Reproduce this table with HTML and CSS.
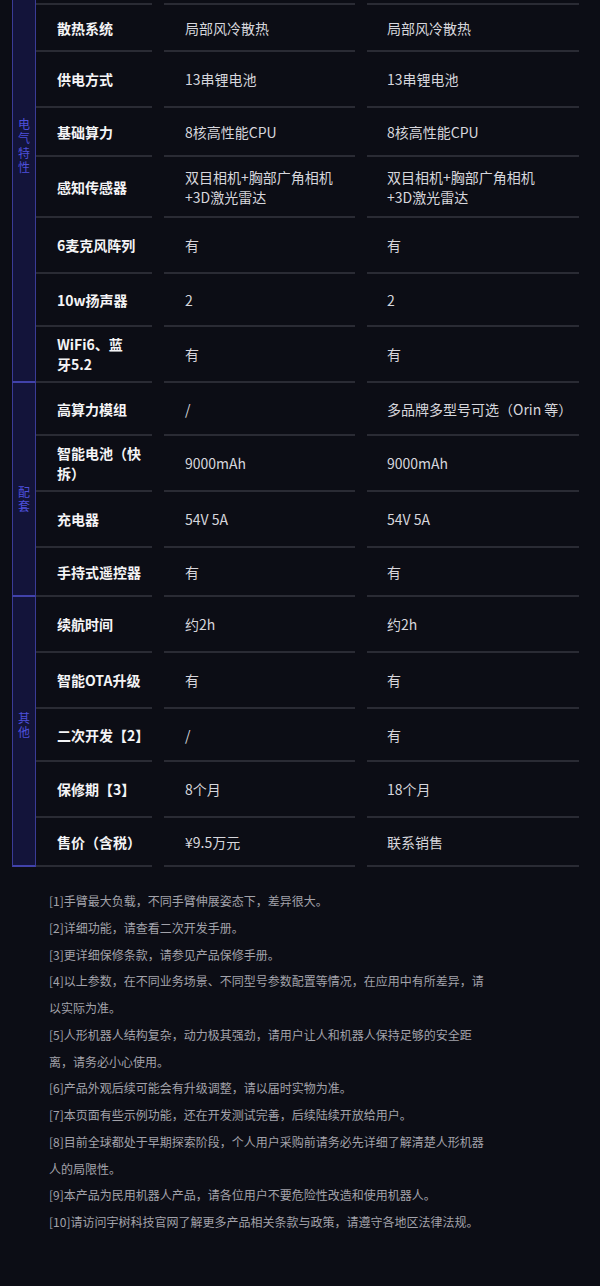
FILE: index.html
```html
<!DOCTYPE html>
<html lang="zh-CN">

<head>
  <meta charset="UTF-8">
  <meta name="viewport" content="width=device-width, initial-scale=1.0">
  <title>参数对比</title>
  <link rel="stylesheet" href="styles.css">
</head>

<body>
  <div class="specs">
    <!-- 电气特性 -->
    <section class="group group-first">
      <div class="cat cat-elec"><span>电<br>气<br>特<br>性</span></div>
      <div class="rows">
        <div class="row row-top">
          <div class="k"></div>
          <div class="v"></div>
          <div class="v"></div>
        </div>
        <div class="row row-xs">
          <div class="k">散热系统</div>
          <div class="v">局部风冷散热</div>
          <div class="v">局部风冷散热</div>
        </div>
        <div class="row row-l">
          <div class="k">供电方式</div>
          <div class="v">13串锂电池</div>
          <div class="v">13串锂电池</div>
        </div>
        <div class="row row-s">
          <div class="k">基础算力</div>
          <div class="v">8核高性能CPU</div>
          <div class="v">8核高性能CPU</div>
        </div>
        <div class="row row-xl">
          <div class="k">感知传感器</div>
          <div class="v">双目相机+胸部广角相机<br>+3D激光雷达</div>
          <div class="v">双目相机+胸部广角相机<br>+3D激光雷达</div>
        </div>
        <div class="row row-l">
          <div class="k">6麦克风阵列</div>
          <div class="v">有</div>
          <div class="v">有</div>
        </div>
        <div class="row">
          <div class="k">10w扬声器</div>
          <div class="v">2</div>
          <div class="v">2</div>
        </div>
        <div class="row row-l">
          <div class="k">WiFi6、蓝<br>牙5.2</div>
          <div class="v">有</div>
          <div class="v">有</div>
        </div>
      </div>
    </section>

    <!-- 配套 -->
    <section class="group">
      <div class="cat cat-kit"><span>配<br>套</span></div>
      <div class="rows">
        <div class="row">
          <div class="k">高算力模组</div>
          <div class="v">/</div>
          <div class="v">多品牌多型号可选（Orin 等）</div>
        </div>
        <div class="row row-l">
          <div class="k">智能电池（快<br>拆）</div>
          <div class="v">9000mAh</div>
          <div class="v">9000mAh</div>
        </div>
        <div class="row row-l">
          <div class="k">充电器</div>
          <div class="v">54V 5A</div>
          <div class="v">54V 5A</div>
        </div>
        <div class="row row-s">
          <div class="k">手持式遥控器</div>
          <div class="v">有</div>
          <div class="v">有</div>
        </div>
      </div>
    </section>

    <!-- 其他 -->
    <section class="group">
      <div class="cat cat-other"><span>其<br>他</span></div>
      <div class="rows">
        <div class="row row-l">
          <div class="k">续航时间</div>
          <div class="v">约2h</div>
          <div class="v">约2h</div>
        </div>
        <div class="row row-l">
          <div class="k">智能OTA升级</div>
          <div class="v">有</div>
          <div class="v">有</div>
        </div>
        <div class="row">
          <div class="k">二次开发【2】</div>
          <div class="v">/</div>
          <div class="v">有</div>
        </div>
        <div class="row row-l">
          <div class="k">保修期【3】</div>
          <div class="v">8个月</div>
          <div class="v">18个月</div>
        </div>
        <div class="row row-s">
          <div class="k">售价（含税）</div>
          <div class="v">¥9.5万元</div>
          <div class="v">联系销售</div>
        </div>
      </div>
    </section>
  </div>

  <div class="notes">
    <p>[1]手臂最大负载，不同手臂伸展姿态下，差异很大。</p>
    <p>[2]详细功能，请查看二次开发手册。</p>
    <p>[3]更详细保修条款，请参见产品保修手册。</p>
    <p>[4]以上参数，在不同业务场景、不同型号参数配置等情况，在应用中有所差异，请以实际为准。</p>
    <p>[5]人形机器人结构复杂，动力极其强劲，请用户让人和机器人保持足够的安全距离，请务必小心使用。</p>
    <p>[6]产品外观后续可能会有升级调整，请以届时实物为准。</p>
    <p>[7]本页面有些示例功能，还在开发测试完善，后续陆续开放给用户。</p>
    <p>[8]目前全球都处于早期探索阶段，个人用户采购前请务必先详细了解清楚人形机器人的局限性。</p>
    <p>[9]本产品为民用机器人产品，请各位用户不要危险性改造和使用机器人。</p>
    <p>[10]请访问宇树科技官网了解更多产品相关条款与政策，请遵守各地区法律法规。</p>
  </div>
</body>

</html>
```

FILE: styles.css
```css
* {
  box-sizing: border-box;
}

body {
  margin: 0;
  background: #0c0d15;
  font-family: "Noto Sans CJK SC", sans-serif;
  color: #d4d4da;
}

/* 规格表 */
.specs {
  padding-left: 12px;
}

.group {
  display: flex;
}

.cat {
  width: 24px;
  flex-shrink: 0;
  display: flex;
  align-items: center;
  justify-content: center;
  background: #13143a;
  border-left: 1px solid #3a3b96;
  border-right: 1px solid #3a3b96;
  border-bottom: 2px solid #4142aa;
  color: #4e50dc;
  font-size: 12px;
  line-height: 14.5px;
  text-align: center;
}

/* 第一组的标签在可视区之外开始，往上推 */
.cat-elec {
  padding-bottom: 90px;
}

.cat-kit {
  padding-top: 20px;
}

.cat-other {
  padding-bottom: 12px;
}

.rows {
  flex: 1;
}

.row {
  display: grid;
  grid-template-columns: 116px 191px 212px;
  column-gap: 12px;
  height: 53px;
}

.row-top {
  height: 5px;
}

.row-xs {
  height: 47px;
}

.row-s {
  height: 49px;
}

.row-l {
  height: 56px;
}

.row-xl {
  height: 61px;
}

.k,
.v {
  display: flex;
  align-items: center;
  padding-left: 21px;
  border-bottom: 2px solid #2a2b34;
  font-size: 14px;
  line-height: 20px;
}

.k {
  font-weight: 700;
  color: #f4f4f6;
  white-space: nowrap;
}

.v {
  color: #d6d6dc;
}

.v:last-child {
  padding-left: 20px;
}

/* 注释 */
.notes {
  margin: 21px 0 0 49px;
  width: 442px;
  color: #a2a2aa;
  font-size: 12px;
  line-height: 26.75px;
}

.notes p {
  margin: 0;
}
```
